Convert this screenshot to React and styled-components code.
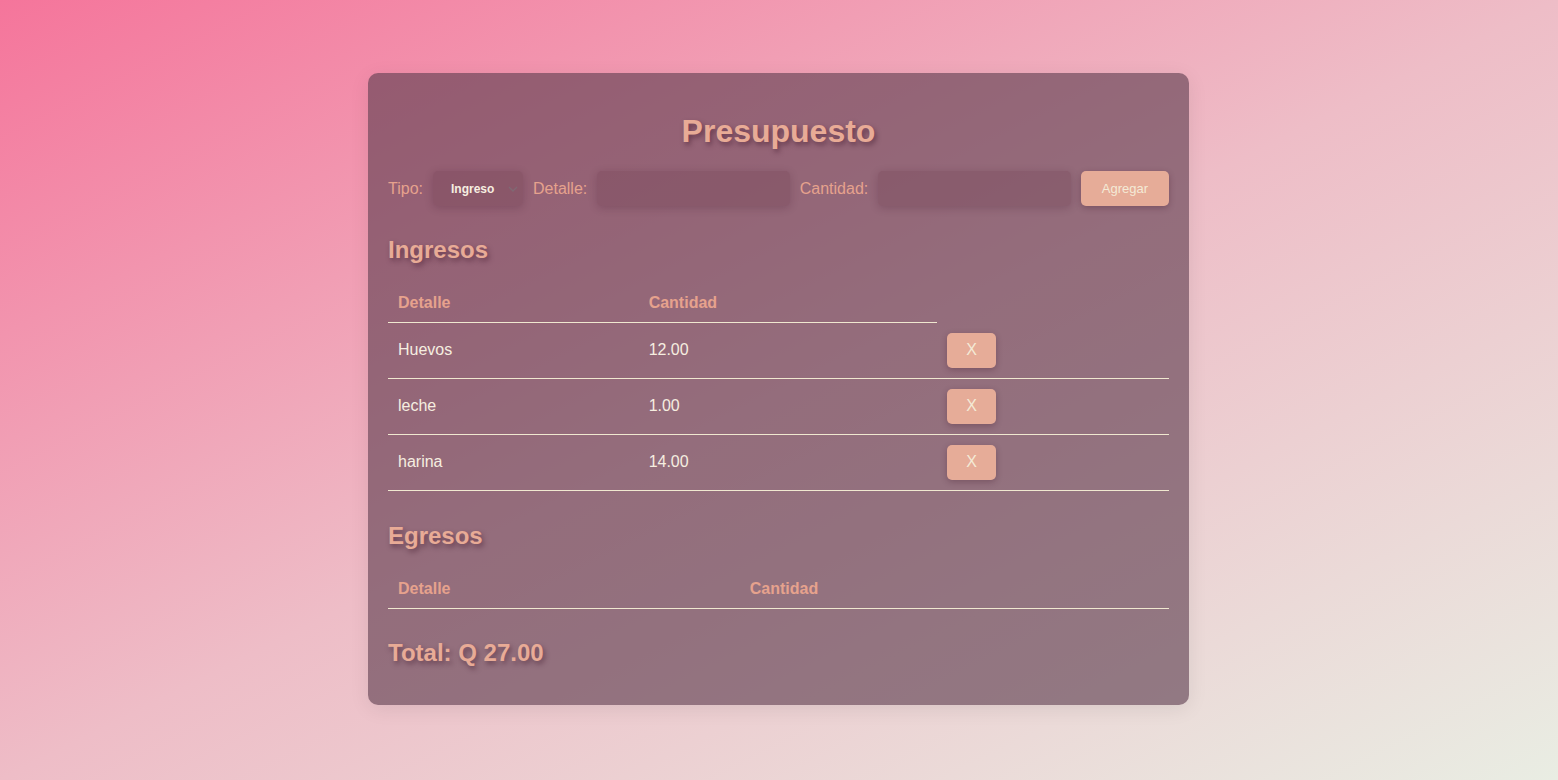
import React, { useState } from "react";
import styled, { createGlobalStyle } from "styled-components";

const GlobalStyle = createGlobalStyle`
  html, body {
    margin: 0;
    padding: 0;
    min-height: 100vh;
  }
  body {
    font-family: "Liberation Sans", Arial, sans-serif;
    background: linear-gradient(to bottom right, #f5759b 0%, #eebdc7 50%, #e9ede3 100%);
    background-attachment: fixed;
  }
`;

const Page = styled.div`
  min-height: 100vh;
  box-sizing: border-box;
  display: flex;
  flex-direction: column;
  align-items: center;
  padding: 73px 1px 0 0;
`;

const Card = styled.div`
  width: 821px;
  box-sizing: border-box;
  padding: 20px 20px 19px;
  border-radius: 10px;
  background: rgba(92, 60, 78, 0.62);
  box-shadow: 0 4px 20px rgba(0, 0, 0, 0.08);
`;

const Title = styled.h1`
  margin: 20px 0 21px;
  font-size: 32px;
  line-height: 37px;
  font-weight: bold;
  text-align: center;
  color: #e8ab96;
  text-shadow: 2px 3px 5px rgba(60, 20, 40, 0.5);
`;

const FormRow = styled.div`
  display: flex;
  align-items: center;
  gap: 10px;
  height: 35px;
`;

const Label = styled.label`
  font-size: 16px;
  color: #e6a28d;
  white-space: nowrap;
`;

const chevron =
  "url(\"data:image/svg+xml,%3Csvg xmlns='http://www.w3.org/2000/svg' width='10' height='6' viewBox='0 0 10 6'%3E%3Cpath d='M1 1l4 4 4-4' fill='none' stroke='%23806873' stroke-width='1.4'/%3E%3C/svg%3E\")";

const Select = styled.select`
  appearance: none;
  -webkit-appearance: none;
  width: 90px;
  height: 35px;
  padding: 0 4px 0 18px;
  border: none;
  border-radius: 5px;
  background: rgba(110, 60, 80, 0.28) ${chevron} no-repeat right 5px center;
  box-shadow: 0 2px 8px rgba(60, 20, 40, 0.22);
  color: #f6eee0;
  font-family: "Liberation Sans", Arial, sans-serif;
  font-size: 12px;
  font-weight: bold;
  outline: none;
`;

const Input = styled.input`
  flex: 1;
  min-width: 0;
  height: 35px;
  box-sizing: border-box;
  border: none;
  border-radius: 5px;
  background: rgba(110, 60, 80, 0.28);
  box-shadow: 0 2px 8px rgba(60, 20, 40, 0.22);
  color: #f6eee0;
  padding: 0 10px;
  outline: none;
`;

const Button = styled.button`
  border: none;
  border-radius: 5px;
  background: #e6ac98;
  color: #f4ead6;
  font-family: "Liberation Sans", Arial, sans-serif;
  font-size: ${(p) => (p.$small ? "16px" : "13px")};
  padding: ${(p) => (p.$small ? "0 19px" : "0 21px")};
  height: 35px;
  box-shadow: 0 2px 6px rgba(60, 20, 40, 0.3);
  cursor: pointer;
  vertical-align: middle;
  line-height: 18px;
`;

const Section = styled.h2`
  margin: ${(p) => (p.$first ? "30px" : "31px")} 0 20px;
  font-size: 24px;
  line-height: 28px;
  font-weight: bold;
  color: #e8ab96;
  text-shadow: 2px 3px 5px rgba(60, 20, 40, 0.5);
`;

const Table = styled.table`
  width: 100%;
  border-collapse: collapse;
  font-size: 16px;
`;

const Th = styled.th`
  text-align: left;
  padding: 10px;
  line-height: 18px;
  color: #e6a28d;
  font-weight: bold;
  border-bottom: 1px solid #f0e8d0;
`;

const Td = styled.td`
  padding: 10px;
  line-height: 18px;
  color: #f6eee0;
  border-bottom: 1px solid #f0e8d0;
  vertical-align: middle;
`;

const Total = styled.h2`
  margin: 30px 0 19px;
  font-size: 24px;
  line-height: 28px;
  font-weight: bold;
  color: #e8ab96;
  text-shadow: 2px 3px 5px rgba(60, 20, 40, 0.5);
`;

const initial = [
  { id: 1, detalle: "Huevos", cantidad: 12 },
  { id: 2, detalle: "leche", cantidad: 1 },
  { id: 3, detalle: "harina", cantidad: 14 },
];

function MovTable({ items, onRemove }) {
  return (
    <Table>
      <thead>
        <tr>
          <Th>Detalle</Th>
          <Th>Cantidad</Th>
        </tr>
      </thead>
      <tbody>
        {items.map((item) => (
          <tr key={item.id}>
            <Td>{item.detalle}</Td>
            <Td>{item.cantidad.toFixed(2)}</Td>
            <Td>
              <Button $small onClick={() => onRemove(item.id)}>
                X
              </Button>
            </Td>
          </tr>
        ))}
      </tbody>
    </Table>
  );
}

export default function App() {
  const [ingresos, setIngresos] = useState(initial);
  const [egresos, setEgresos] = useState([]);
  const [tipo, setTipo] = useState("ingreso");
  const [detalle, setDetalle] = useState("");
  const [cantidad, setCantidad] = useState("");

  const agregar = () => {
    const n = parseFloat(cantidad);
    if (!detalle || isNaN(n)) return;
    const item = { id: Date.now(), detalle, cantidad: n };
    if (tipo === "ingreso") setIngresos([...ingresos, item]);
    else setEgresos([...egresos, item]);
    setDetalle("");
    setCantidad("");
  };

  const total =
    ingresos.reduce((a, i) => a + i.cantidad, 0) -
    egresos.reduce((a, i) => a + i.cantidad, 0);

  return (
    <>
      <GlobalStyle />
      <Page>
        <Card>
          <Title>Presupuesto</Title>
          <FormRow>
            <Label>Tipo:</Label>
            <Select value={tipo} onChange={(e) => setTipo(e.target.value)}>
              <option value="ingreso">Ingreso</option>
              <option value="egreso">Egreso</option>
            </Select>
            <Label>Detalle:</Label>
            <Input value={detalle} onChange={(e) => setDetalle(e.target.value)} />
            <Label>Cantidad:</Label>
            <Input
              type="number"
              value={cantidad}
              onChange={(e) => setCantidad(e.target.value)}
            />
            <Button onClick={agregar}>Agregar</Button>
          </FormRow>
          <Section $first>Ingresos</Section>
          <MovTable
            items={ingresos}
            onRemove={(id) => setIngresos(ingresos.filter((i) => i.id !== id))}
          />
          <Section>Egresos</Section>
          <MovTable
            items={egresos}
            onRemove={(id) => setEgresos(egresos.filter((i) => i.id !== id))}
          />
          <Total>Total: Q {total.toFixed(2)}</Total>
        </Card>
      </Page>
    </>
  );
}
